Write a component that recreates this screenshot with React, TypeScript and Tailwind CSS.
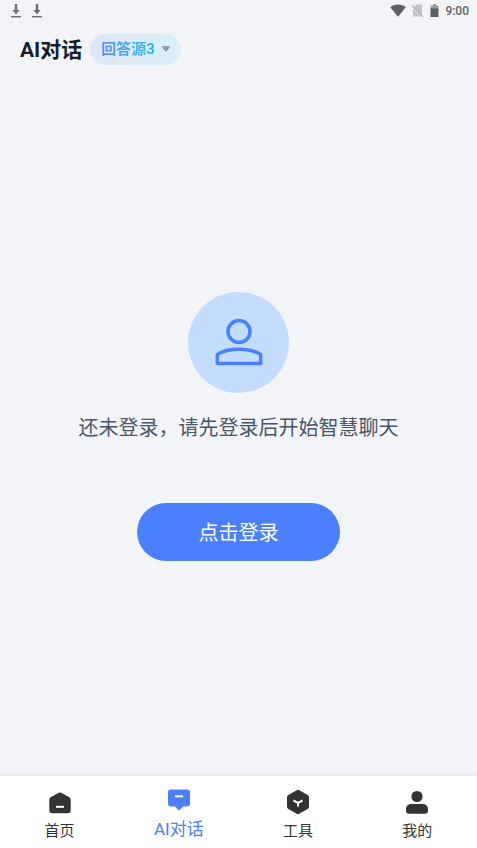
import type { ReactNode } from "react";

function DownloadIcon() {
  return (
    <svg width="12" height="14" viewBox="0 0 12 14" fill="#6a6b6e">
      <path d="M4.800 0h2.400v6h2.500L6 10.200 2.300 6h2.500z" />
      <path d="M1 12h10v1.400H1z" />
    </svg>
  );
}

function StatusBar() {
  return (
    <div className="flex h-[22px] items-center justify-between pr-2 pl-[10px]">
      <div className="flex gap-[9px]">
        <DownloadIcon />
        <DownloadIcon />
      </div>

      <div className="flex items-center">
        <svg width="16" height="14" viewBox="0 0 16 14" fill="#5f6063">
          <path d="M8 12.800.2 3.200C2.400 1.400 5 .5 8 .5s5.600.9 7.800 2.700z" />
        </svg>
        <svg className="ml-[5px]" width="13" height="14" viewBox="0 0 13 14">
          <path d="M5 .5h6v12L3 4z" fill="#c3c4c7" />
          <path d="M2 4.500 9.800 12.500H2z" fill="#c3c4c7" />
          <path d="M1 1.500 12 13" stroke="#aeafb2" strokeWidth="1.200" />
        </svg>
        <svg className="ml-[6px]" width="9" height="14" viewBox="0 0 9 14">
          <path d="M3 0h3v1.500h2.500V5H.5V1.500H3z" fill="#98999b" />
          <path d="M.5 4.500h8V13h-8z" fill="#5c5d60" />
        </svg>
        <span className="ml-[6px] text-[12px] leading-4 font-medium text-[#606164]">
          9:00
        </span>
      </div>
    </div>
  );
}

function Header() {
  return (
    <header className="flex h-[54px] items-center px-5">
      <h1 className="pt-[2px] text-[21px] leading-7 font-bold text-[#141b2b]">
        AI对话
      </h1>

      <button
        type="button"
        className="ml-2 flex h-[31px] items-center gap-[7px] rounded-full bg-linear-to-r from-[#dfe6f7] to-[#d9f1f8] pr-[11px] pl-[11px]"
      >
        <span className="bg-linear-to-r from-[#5a8dff] to-[#12bdf5] bg-clip-text text-[15px] leading-5 font-bold text-transparent">
          回答源3
        </span>
        <svg width="8" height="6" viewBox="0 0 8 6" fill="#939cab">
          <path d="M.8 0h6.400c.7 0 1 .8.600 1.300L4.700 5.200a.9.900 0 0 1-1.400 0L.2 1.300C-.2.800.1 0 .8 0z" />
        </svg>
      </button>
    </header>
  );
}

function LoginPrompt() {
  return (
    <main className="flex flex-1 flex-col items-center justify-center">
      <div className="flex size-[101px] items-center justify-center rounded-full bg-[#c4dcff]">
        <svg
          width="48"
          height="48"
          viewBox="0 0 48 48"
          fill="none"
          stroke="#4a80ff"
          strokeWidth="3.500"
          strokeLinejoin="round"
        >
          <circle cx="24" cy="13.500" r="11" />
          <path d="M2.300 45.500V36.500C8 33 15.500 31.300 24 31.300s16 1.700 21.700 5.200v9z" />
        </svg>
      </div>

      <p className="mt-5 text-center text-[20px] leading-[30px] text-[#4a5568]">
        还未登录，请先登录后开始智慧聊天
      </p>

      <button
        type="button"
        className="mt-[60px] h-[58px] w-[203px] rounded-full bg-[#4a80ff] pt-[2px] text-[20px] text-white"
      >
        点击登录
      </button>
    </main>
  );
}

type TabProps = {
  label: string;
  active?: boolean;
  children: ReactNode;
};

function Tab({ label, active, children }: TabProps) {
  return (
    <a
      href="#"
      aria-current={active ? "page" : undefined}
      className={
        active
          ? "flex flex-1 flex-col items-center gap-1 text-[17px] leading-5 text-[#4a80ff]"
          : "flex flex-1 flex-col items-center gap-[6px] text-[15px] leading-5 text-[#333333]"
      }
    >
      <svg width="24" height="26" viewBox="0 0 24 26" fill="currentColor">
        {children}
      </svg>
      {label}
    </a>
  );
}

function TabBar() {
  return (
    <nav className="flex h-[72px] bg-white pt-[13px] shadow-[0_0_6px_rgba(0,0,0,0.12)]">
      <Tab label="首页">
        <path d="M10.700 3.800a2.600 2.600 0 0 1 2.600 0l8 4.500a2.600 2.600 0 0 1 1.400 2.300v10.700a3 3 0 0 1-3 3H4.300a3 3 0 0 1-3-3V10.600a2.600 2.600 0 0 1 1.400-2.300z" />
        <path d="M8 17.800h8" stroke="white" strokeWidth="2" />
      </Tab>

      <Tab label="AI对话" active>
        <path d="M4 .5h16a3 3 0 0 1 3 3v11a3 3 0 0 1-3 3h-4l-3 3.200a1.400 1.400 0 0 1-2 0l-3-3.200H4a3 3 0 0 1-3-3v-11a3 3 0 0 1 3-3z" />
        <path d="M8 7.300h8" stroke="white" strokeWidth="2" />
      </Tab>

      <Tab label="工具">
        <path d="M10.800 1.200a2.400 2.400 0 0 1 2.400 0l8.500 4.800A2.600 2.600 0 0 1 23 8.300v9.500a2.600 2.600 0 0 1-1.300 2.200l-8.500 4.800a2.400 2.400 0 0 1-2.400 0l-8.500-4.800A2.600 2.600 0 0 1 1 17.800V8.300a2.600 2.600 0 0 1 1.300-2.300z" />
        <path
          d="m7.500 11.500 4.500 2.300 4.500-2.300M12 13.800v3.800"
          stroke="white"
          strokeWidth="2"
          fill="none"
        />
      </Tab>

      <Tab label="我的">
        <circle cx="12" cy="7.500" r="5.600" />
        <path d="M6 15h12a5 5 0 0 1 5 5v1.500a3.200 3.200 0 0 1-3.200 3.200H4.200A3.200 3.200 0 0 1 1 21.500V20a5 5 0 0 1 5-5z" />
      </Tab>
    </nav>
  );
}

export default function App() {
  return (
    <div className="flex min-h-screen flex-col bg-[#f2f4f8] font-[Roboto,'Noto_Sans_CJK_SC',sans-serif]">
      <StatusBar />
      <Header />
      <LoginPrompt />
      <TabBar />
    </div>
  );
}
